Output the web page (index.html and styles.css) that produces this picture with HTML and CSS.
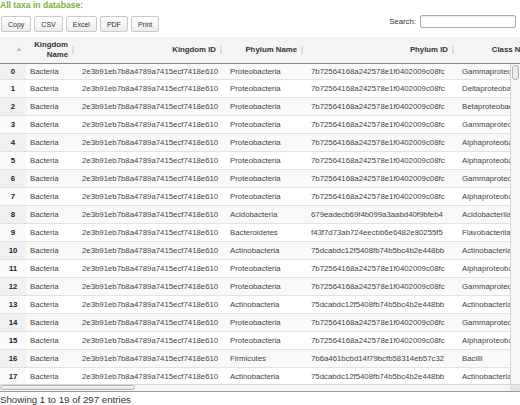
FILE: index.html
```html
<!DOCTYPE html>
<html>
<head>
<meta charset="utf-8">
<title>All taxa</title>
<link rel="stylesheet" href="styles.css">
</head>
<body>
<h3 class="title">All taxa in database:</h3>
<div class="toolbar">
  <div class="buttons">
    <button class="btn">Copy</button>
    <button class="btn">CSV</button>
    <button class="btn">Excel</button>
    <button class="btn">PDF</button>
    <button class="btn">Print</button>
  </div>
  <label class="search">Search: <input class="search-input" type="search"></label>
</div>
<div class="scroll">
  <div class="scroll-head">
    <table class="grid">
      <colgroup>
        <col class="c-idx"><col class="c-kn"><col class="c-kid"><col class="c-pn"><col class="c-pid"><col class="c-cn"><col class="c-cid"><col class="c-on">
      </colgroup>
      <thead>
        <tr>
          <th class="asc"></th>
          <th>Kingdom Name</th>
          <th>Kingdom ID</th>
          <th>Phylum Name</th>
          <th>Phylum ID</th>
          <th>Class Name</th>
          <th>Class ID</th>
          <th>Order Name</th>
        </tr>
      </thead>
    </table>
  </div>
  <div class="scroll-body">
    <div class="body-row">
      <div class="viewport">
        <table class="grid">
          <colgroup>
            <col class="c-idx"><col class="c-kn"><col class="c-kid"><col class="c-pn"><col class="c-pid"><col class="c-cn"><col class="c-cid"><col class="c-on">
          </colgroup>
          <tbody>
            <tr><td>0</td><td>Bacteria</td><td>2e3b91eb7b8a4789a7415ecf7418e610</td><td>Proteobacteria</td><td>7b72564168a242578e1f0402009c08fc</td><td>Gammaproteobacteria</td><td>1a0c3f4e9b2d4c7a8e6f5b3d2c1a0e9f</td><td>Enterobacterales</td></tr>
            <tr><td>1</td><td>Bacteria</td><td>2e3b91eb7b8a4789a7415ecf7418e610</td><td>Proteobacteria</td><td>7b72564168a242578e1f0402009c08fc</td><td>Deltaproteobacteria</td><td>4c2e8a1b7d3f4e6a9c0b5d8e2f1a3c7b</td><td>Desulfobacterales</td></tr>
            <tr><td>2</td><td>Bacteria</td><td>2e3b91eb7b8a4789a7415ecf7418e610</td><td>Proteobacteria</td><td>7b72564168a242578e1f0402009c08fc</td><td>Betaproteobacteria</td><td>9e1d3b5a7c2f4a8e6b0d1c3e5f7a9b2d</td><td>Burkholderiales</td></tr>
            <tr><td>3</td><td>Bacteria</td><td>2e3b91eb7b8a4789a7415ecf7418e610</td><td>Proteobacteria</td><td>7b72564168a242578e1f0402009c08fc</td><td>Gammaproteobacteria</td><td>1a0c3f4e9b2d4c7a8e6f5b3d2c1a0e9f</td><td>Pseudomonadales</td></tr>
            <tr><td>4</td><td>Bacteria</td><td>2e3b91eb7b8a4789a7415ecf7418e610</td><td>Proteobacteria</td><td>7b72564168a242578e1f0402009c08fc</td><td>Alphaproteobacteria</td><td>6b8d0f2a4c6e4b8a0d2f4a6c8e0b2d4f</td><td>Rhizobiales</td></tr>
            <tr><td>5</td><td>Bacteria</td><td>2e3b91eb7b8a4789a7415ecf7418e610</td><td>Proteobacteria</td><td>7b72564168a242578e1f0402009c08fc</td><td>Alphaproteobacteria</td><td>6b8d0f2a4c6e4b8a0d2f4a6c8e0b2d4f</td><td>Sphingomonadales</td></tr>
            <tr><td>6</td><td>Bacteria</td><td>2e3b91eb7b8a4789a7415ecf7418e610</td><td>Proteobacteria</td><td>7b72564168a242578e1f0402009c08fc</td><td>Gammaproteobacteria</td><td>1a0c3f4e9b2d4c7a8e6f5b3d2c1a0e9f</td><td>Xanthomonadales</td></tr>
            <tr><td>7</td><td>Bacteria</td><td>2e3b91eb7b8a4789a7415ecf7418e610</td><td>Proteobacteria</td><td>7b72564168a242578e1f0402009c08fc</td><td>Alphaproteobacteria</td><td>6b8d0f2a4c6e4b8a0d2f4a6c8e0b2d4f</td><td>Rhodobacterales</td></tr>
            <tr><td>8</td><td>Bacteria</td><td>2e3b91eb7b8a4789a7415ecf7418e610</td><td>Acidobacteria</td><td>679eadecb69f4b099a3aabd40f9bfeb4</td><td>Acidobacteriia</td><td>3f5a7c9e1b3d4f6a8c0e2b4d6f8a0c2e</td><td>Acidobacteriales</td></tr>
            <tr><td>9</td><td>Bacteria</td><td>2e3b91eb7b8a4789a7415ecf7418e610</td><td>Bacteroidetes</td><td>f43f7d73ab724eecbb6e6482e80255f5</td><td>Flavobacteriia</td><td>8a0c2e4f6b8d4a0c2e4f6a8b0d2f4a6c</td><td>Flavobacteriales</td></tr>
            <tr><td>10</td><td>Bacteria</td><td>2e3b91eb7b8a4789a7415ecf7418e610</td><td>Actinobacteria</td><td>75dcabdc12f5408fb74b5bc4b2e448bb</td><td>Actinobacteria</td><td>5d7f9b1c3e5a4c7e9b1d3f5a7c9e1b3d</td><td>Actinomycetales</td></tr>
            <tr><td>11</td><td>Bacteria</td><td>2e3b91eb7b8a4789a7415ecf7418e610</td><td>Proteobacteria</td><td>7b72564168a242578e1f0402009c08fc</td><td>Alphaproteobacteria</td><td>6b8d0f2a4c6e4b8a0d2f4a6c8e0b2d4f</td><td>Caulobacterales</td></tr>
            <tr><td>12</td><td>Bacteria</td><td>2e3b91eb7b8a4789a7415ecf7418e610</td><td>Proteobacteria</td><td>7b72564168a242578e1f0402009c08fc</td><td>Gammaproteobacteria</td><td>1a0c3f4e9b2d4c7a8e6f5b3d2c1a0e9f</td><td>Vibrionales</td></tr>
            <tr><td>13</td><td>Bacteria</td><td>2e3b91eb7b8a4789a7415ecf7418e610</td><td>Actinobacteria</td><td>75dcabdc12f5408fb74b5bc4b2e448bb</td><td>Actinobacteria</td><td>5d7f9b1c3e5a4c7e9b1d3f5a7c9e1b3d</td><td>Streptomycetales</td></tr>
            <tr><td>14</td><td>Bacteria</td><td>2e3b91eb7b8a4789a7415ecf7418e610</td><td>Proteobacteria</td><td>7b72564168a242578e1f0402009c08fc</td><td>Gammaproteobacteria</td><td>1a0c3f4e9b2d4c7a8e6f5b3d2c1a0e9f</td><td>Alteromonadales</td></tr>
            <tr><td>15</td><td>Bacteria</td><td>2e3b91eb7b8a4789a7415ecf7418e610</td><td>Proteobacteria</td><td>7b72564168a242578e1f0402009c08fc</td><td>Alphaproteobacteria</td><td>6b8d0f2a4c6e4b8a0d2f4a6c8e0b2d4f</td><td>Rhodospirillales</td></tr>
            <tr><td>16</td><td>Bacteria</td><td>2e3b91eb7b8a4789a7415ecf7418e610</td><td>Firmicutes</td><td>7b6a461bcbd14f79bcfb58314eb57c32</td><td>Bacilli</td><td>2c4e6a8b0d2f4c6e8a0b2d4f6c8e0a2b</td><td>Bacillales</td></tr>
            <tr><td>17</td><td>Bacteria</td><td>2e3b91eb7b8a4789a7415ecf7418e610</td><td>Actinobacteria</td><td>75dcabdc12f5408fb74b5bc4b2e448bb</td><td>Actinobacteria</td><td>5d7f9b1c3e5a4c7e9b1d3f5a7c9e1b3d</td><td>Corynebacteriales</td></tr>
            <tr><td>18</td><td>Bacteria</td><td>2e3b91eb7b8a4789a7415ecf7418e610</td><td>Proteobacteria</td><td>7b72564168a242578e1f0402009c08fc</td><td>Gammaproteobacteria</td><td>1a0c3f4e9b2d4c7a8e6f5b3d2c1a0e9f</td><td>Enterobacterales</td></tr>
          </tbody>
        </table>
      </div>
      <div class="vbar"><div class="vthumb"></div></div>
    </div>
    <div class="hbar-row">
      <div class="hbar"><div class="hthumb"></div></div>
      <div class="corner"></div>
    </div>
  </div>
</div>
<div class="info">Showing 1 to 19 of 297 entries</div>
</body>
</html>
```

FILE: styles.css
```css
html, body {
  margin: 0;
  padding: 0;
  background: #fff;
}
body {
  font-family: "Liberation Sans", Arial, sans-serif;
  color: #333;
  width: 520px;
  height: 405px;
  overflow: hidden;
}
.title {
  margin: 0;
  font-size: 8.6px;
  line-height: 11px;
  font-weight: bold;
  color: #78b23a;
}
.toolbar {
  display: flex;
  justify-content: space-between;
  align-items: flex-start;
  margin-top: 4px;
  height: 19px;
}
.buttons {
  display: flex;
  gap: 3px;
  margin-top: 1px;
  padding-left: 1px;
}
.btn {
  font-family: "Liberation Sans", Arial, sans-serif;
  font-size: 7px;
  color: #333;
  height: 16px;
  min-width: 28px;
  padding: 0 6px;
  margin: 0;
  border: 1px solid #c9c9c9;
  border-radius: 2px;
  background: linear-gradient(#ffffff, #ececec);
}
.search {
  font-size: 7.8px;
  color: #333;
  display: flex;
  align-items: center;
  gap: 4px;
  margin-right: 4px;
}
.search-input {
  width: 96px;
  height: 13px;
  box-sizing: border-box;
  border: 1px solid #a9a9a9;
  border-radius: 2px;
  padding: 0 2px;
  margin: 0;
  background: #fff;
  box-shadow: inset 0 1px 1px rgba(0,0,0,0.08);
}
.scroll {
  margin-top: 3px;
}
.scroll-head {
  overflow: hidden;
  width: 520px;
  background: #f4f4f4;
}
.scroll-body {
  width: 520px;
  border-bottom: 1px solid #999;
}
.body-row {
  display: flex;
  height: 320px;
}
.viewport {
  width: 510px;
  height: 320px;
  overflow: hidden;
}
.vbar {
  width: 10px;
  height: 320px;
  box-sizing: border-box;
  background: #f6f6f6;
  border-left: 1px solid #d6d6d6;
  padding: 1px 1px 0 1px;
}
.vthumb {
  height: 15px;
  box-sizing: border-box;
  background: linear-gradient(90deg, #f2f2f2, #e4e4e4);
  border: 1px solid #b4b4b4;
  border-radius: 3px;
}
.hbar-row {
  display: flex;
  height: 7px;
}
.hbar {
  width: 510px;
  box-sizing: border-box;
  background: #f6f6f6;
  border-top: 1px solid #d6d6d6;
  padding: 0 0 1px 0;
}
.hthumb {
  width: 135px;
  height: 100%;
  box-sizing: border-box;
  background: linear-gradient(#f2f2f2, #e2e2e2);
  border: 1px solid #b4b4b4;
  border-radius: 3px;
}
.corner {
  width: 10px;
  background: #e4e4e4;
  border-top: 1px solid #d6d6d6;
}
.grid {
  table-layout: fixed;
  border-collapse: separate;
  border-spacing: 0;
  width: 796px;
  font-size: 7.8px;
}
.c-idx { width: 26px; }
.c-kn { width: 52px; }
.c-kid { width: 148px; }
.c-pn { width: 81px; }
.c-pid { width: 151px; }
.c-cn { width: 88px; }
.c-cid { width: 150px; }
.c-on { width: 100px; }

.grid th {
  position: relative;
  font-weight: bold;
  color: #333;
  text-align: right;
  vertical-align: middle;
  line-height: 10px;
  padding: 3px 10px 3px 4px;
  border-bottom: 1px solid #888;
  background: #f4f4f4;
  white-space: nowrap;
}
.grid th:nth-child(2) {
  white-space: normal;
}
.grid th::after {
  content: "";
  position: absolute;
  right: 4px;
  top: 50%;
  width: 2px;
  height: 8px;
  margin-top: -4px;
  background: linear-gradient(#e2e2e2, #d6d6d6);
  border-radius: 1px;
}
.grid th.asc::after {
  width: 0;
  height: 0;
  right: 5px;
  margin-top: -3px;
  background: none;
  border-left: 2.5px solid transparent;
  border-right: 2.5px solid transparent;
  border-bottom: 4px solid #a9b6cc;
  border-radius: 0;
}
.grid td {
  height: 17px;
  padding: 0 4px;
  white-space: nowrap;
  overflow: hidden;
  color: #444;
  border-top: 1px solid #e2e2e2;
  background: #fff;
}
.grid tbody tr:first-child td {
  border-top: none;
  height: 15px;
}
.grid tbody tr:nth-child(odd) td {
  background: #f9f9f9;
}
.grid td:first-child {
  text-align: center;
  font-weight: bold;
  color: #222;
  background: #fafafa;
}
.grid tbody tr:nth-child(odd) td:first-child {
  background: #f1f1f1;
}
.info {
  font-size: 9.7px;
  line-height: 12px;
  padding-top: 2px;
  color: #333;
}
```
